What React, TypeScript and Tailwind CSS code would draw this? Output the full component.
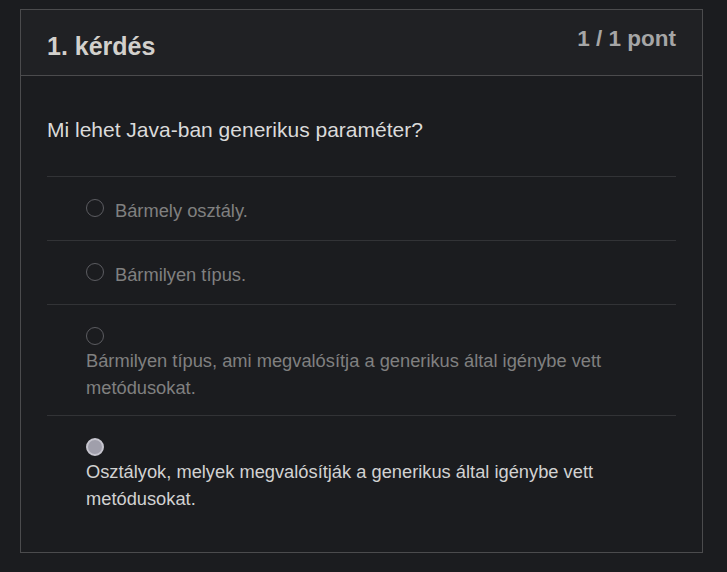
type Option = {
  text: string;
  checked?: boolean;
  wrap?: boolean;
};

const options: Option[] = [
  { text: "Bármely osztály." },
  { text: "Bármilyen típus." },
  {
    text: "Bármilyen típus, ami megvalósítja a generikus által igénybe vett metódusokat.",
    wrap: true,
  },
  {
    text: "Osztályok, melyek megvalósítják a generikus által igénybe vett metódusokat.",
    wrap: true,
    checked: true,
  },
];

function Radio({ checked }: { checked?: boolean }) {
  if (checked) {
    return (
      <span className="block w-[18px] h-[18px] shrink-0 rounded-full bg-[#a09fab] border-2 border-[#c6c5ce]" />
    );
  }
  return <span className="block w-[18px] h-[18px] shrink-0 rounded-full border border-[#5c5c61]" />;
}

function OptionRow({ option }: { option: Option }) {
  const textColor = option.checked ? "text-[#d2d2d2]" : "text-[#808080]";
  return (
    <div className="border-t border-[#323336] pl-[39px]">
      {option.wrap ? (
        <div className="pt-[22px] pb-[14px]">
          <Radio checked={option.checked} />
          <p className={`mt-[2px] text-[18.3px] leading-[27px] ${textColor}`}>{option.text}</p>
        </div>
      ) : (
        <div className="flex items-start gap-[11px] pt-[20px] pb-[16px]">
          <span className="mt-[2px]">
            <Radio checked={option.checked} />
          </span>
          <p className={`text-[18.3px] leading-[27px] ${textColor}`}>{option.text}</p>
        </div>
      )}
    </div>
  );
}

export default function App() {
  return (
    <div
      className="min-h-screen bg-[#1b1c1f] pt-[9px] pl-5"
      style={{ fontFamily: '"Liberation Sans", Arial, sans-serif' }}
    >
      <div className="w-[683px] border border-[#4b4b4d]">
        {/* Header */}
        <div className="h-[65px] flex justify-between px-[26px] bg-[#202124] border-b border-[#4b4b4d] box-content">
          <h2 className="pt-[22px] text-[25px] leading-[28px] font-bold text-[#d2d0cc]">1. kérdés</h2>
          <span className="pt-[16px] text-[22.5px] leading-[26px] font-bold text-[#a6a6a6]">1 / 1 pont</span>
        </div>

        {/* Body */}
        <div className="px-[26px] pt-[42px] pb-[26px]">
          <p className="text-[21px] leading-[24px] text-[#dadada] mb-[34px]">
            Mi lehet Java-ban generikus paraméter?
          </p>
          <div>
            {options.map((o, i) => (
              <OptionRow key={i} option={o} />
            ))}
          </div>
        </div>
      </div>
    </div>
  );
}
